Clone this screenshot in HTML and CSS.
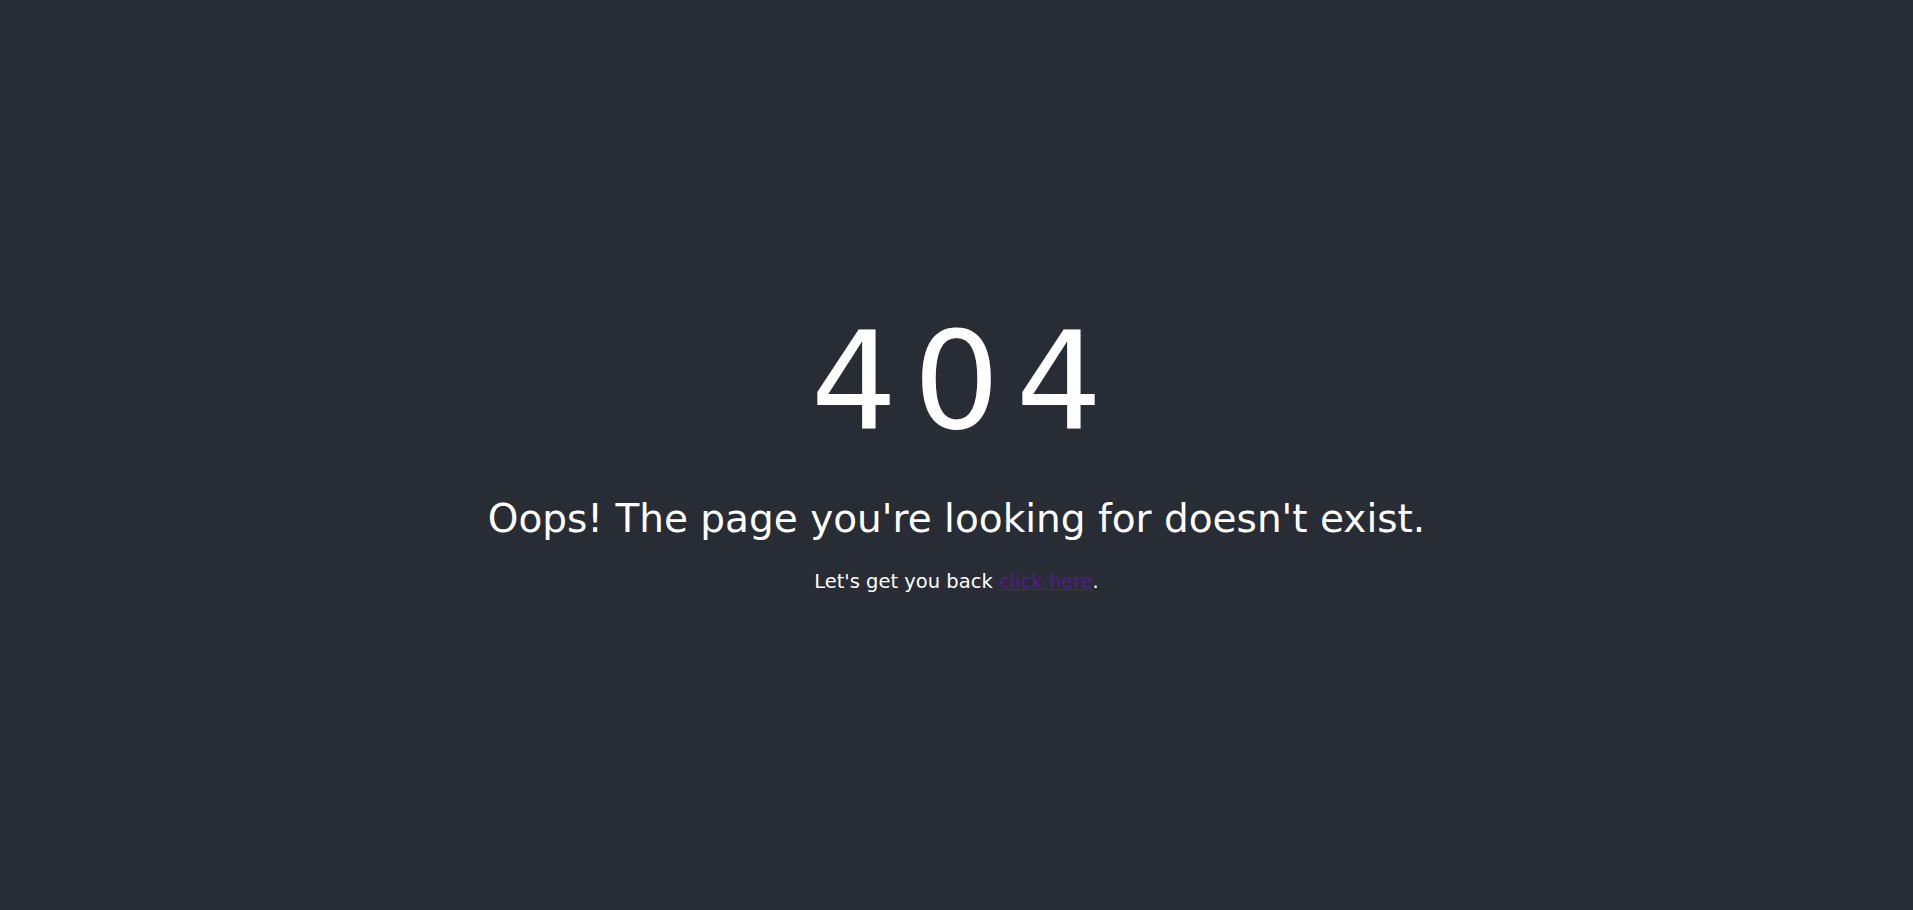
FILE: index.html
```html
<!DOCTYPE html>
<html lang="en">
<head>
<meta charset="utf-8">
<title>404</title>
<link rel="stylesheet" href="styles.css">
</head>
<body>
<main class="page">
  <h1 class="code">404</h1>
  <h2 class="message">Oops! The page you're looking for doesn't exist.</h2>
  <p class="back">Let's get you back <a class="link" href="#">click here</a>.</p>
</main>
</body>
</html>
```

FILE: styles.css
```css
html, body {
  margin: 0;
  padding: 0;
  height: 100%;
}
body {
  background: #282c34;
  color: #ffffff;
  font-family: "DejaVu Sans", "Open Sans", sans-serif;
}
.page {
  height: 100vh;
  display: flex;
  flex-direction: column;
  align-items: center;
  justify-content: center;
  text-align: center;
}
.code {
  margin: 0 0 28px;
  padding-left: 16px;
  font-size: 136px;
  font-weight: 400;
  line-height: 160px;
  letter-spacing: 16px;
}
.message {
  margin: 0;
  font-size: 39px;
  font-weight: 400;
  line-height: 60px;
}
.back {
  margin: 21px 0 15px;
  font-size: 19.5px;
  line-height: 24px;
}
.link {
  color: #551a8b;
}
```
